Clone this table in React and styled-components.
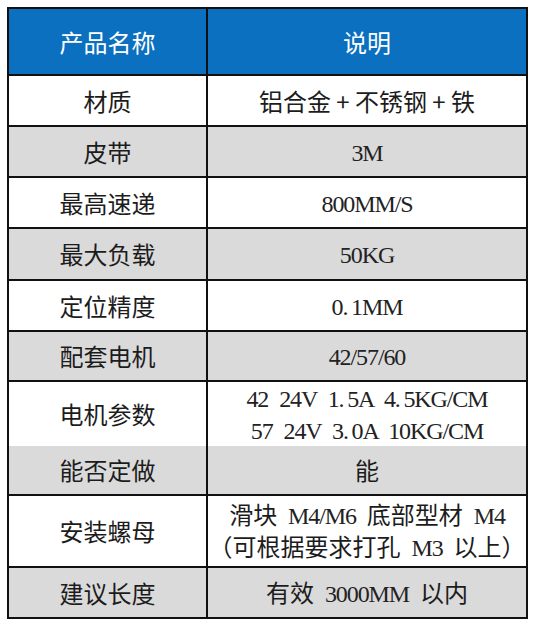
import React from "react";
import styled, { createGlobalStyle } from "styled-components";

const Global = createGlobalStyle`
  html, body { margin: 0; padding: 0; background: #ffffff; }
  body { font-family: "Noto Sans CJK SC", "Noto Sans", sans-serif; }
`;

const Page = styled.div`
  padding: 7px 5px 7px 7px;
  width: 533px;
  box-sizing: border-box;
`;

const Table = styled.div`
  display: flex;
  flex-direction: column;
  gap: 2px;
  padding: 2px;
  background: #111111;
  width: 521px;
  box-sizing: border-box;
`;

const Row = styled.div`
  display: grid;
  grid-template-columns: 197px 318px;
  gap: 2px;
  height: ${(p) => p.$h}px;
`;

const Cell = styled.div`
  display: flex;
  flex-direction: column;
  align-items: center;
  justify-content: center;
  background: ${(p) => (p.$head ? "#0b70c0" : p.$shade ? "#dadada" : "#ffffff")};
  color: ${(p) => (p.$head ? "#ffffff" : "#1c1c1c")};
  font-family: "Noto Sans CJK SC", "Noto Sans", sans-serif;
  font-size: 24px;
  font-weight: 400;
  line-height: ${(p) => p.$lh || 30}px;
  white-space: nowrap;
`;

const Line = styled.div`
  display: block;
`;

const M = styled.span`
  font-family: "Liberation Serif", serif;
  letter-spacing: -1.1px;
  word-spacing: 6px;
  font-size: 24px;
  color: #222222;
`;

const rows = [
  { label: "材质", h: 49, lines: [<>铝合金 + 不锈钢 + 铁</>] },
  { label: "皮带", h: 49, lines: [<M>3M</M>] },
  { label: "最高速递", h: 49, lines: [<M>800MM/S</M>] },
  { label: "最大负载", h: 50, lines: [<M>50KG</M>] },
  { label: "定位精度", h: 49, lines: [<M>0.{"\u2009"}1MM</M>] },
  { label: "配套电机", h: 48, lines: [<M>42/57/60</M>] },
  {
    label: "电机参数",
    h: 62,
    lh: 30,
    lines: [
      <M>42 24V 1.{"\u2009"}5A 4.{"\u2009"}5KG/CM</M>,
      <M>57 24V 3.{"\u2009"}0A 10KG/CM</M>,
    ],
  },
  { label: "能否定做", h: 48, lines: [<>能</>] },
  {
    label: "安装螺母",
    h: 70,
    lh: 29,
    lines: [
      <>滑块<M> M4/M6 </M>底部型材<M> M4</M></>,
      <>（可根据要求打孔<M> M3 </M>以上）</>,
    ],
  },
  { label: "建议长度", h: 49, lines: [<>有效<M> 3000MM </M>以内</>] },
];

export default function App() {
  return (
    <Page>
      <Global />
      <Table>
        <Row $h={65}>
          <Cell $head>产品名称</Cell>
          <Cell $head>说明</Cell>
        </Row>
        {rows.map((r, i) => (
          <Row key={r.label} $h={r.h}>
            <Cell $shade={i % 2 === 1}>{r.label}</Cell>
            <Cell $shade={i % 2 === 1} $lh={r.lh}>
              {r.lines.map((l, j) => (
                <Line key={j}>{l}</Line>
              ))}
            </Cell>
          </Row>
        ))}
      </Table>
    </Page>
  );
}
